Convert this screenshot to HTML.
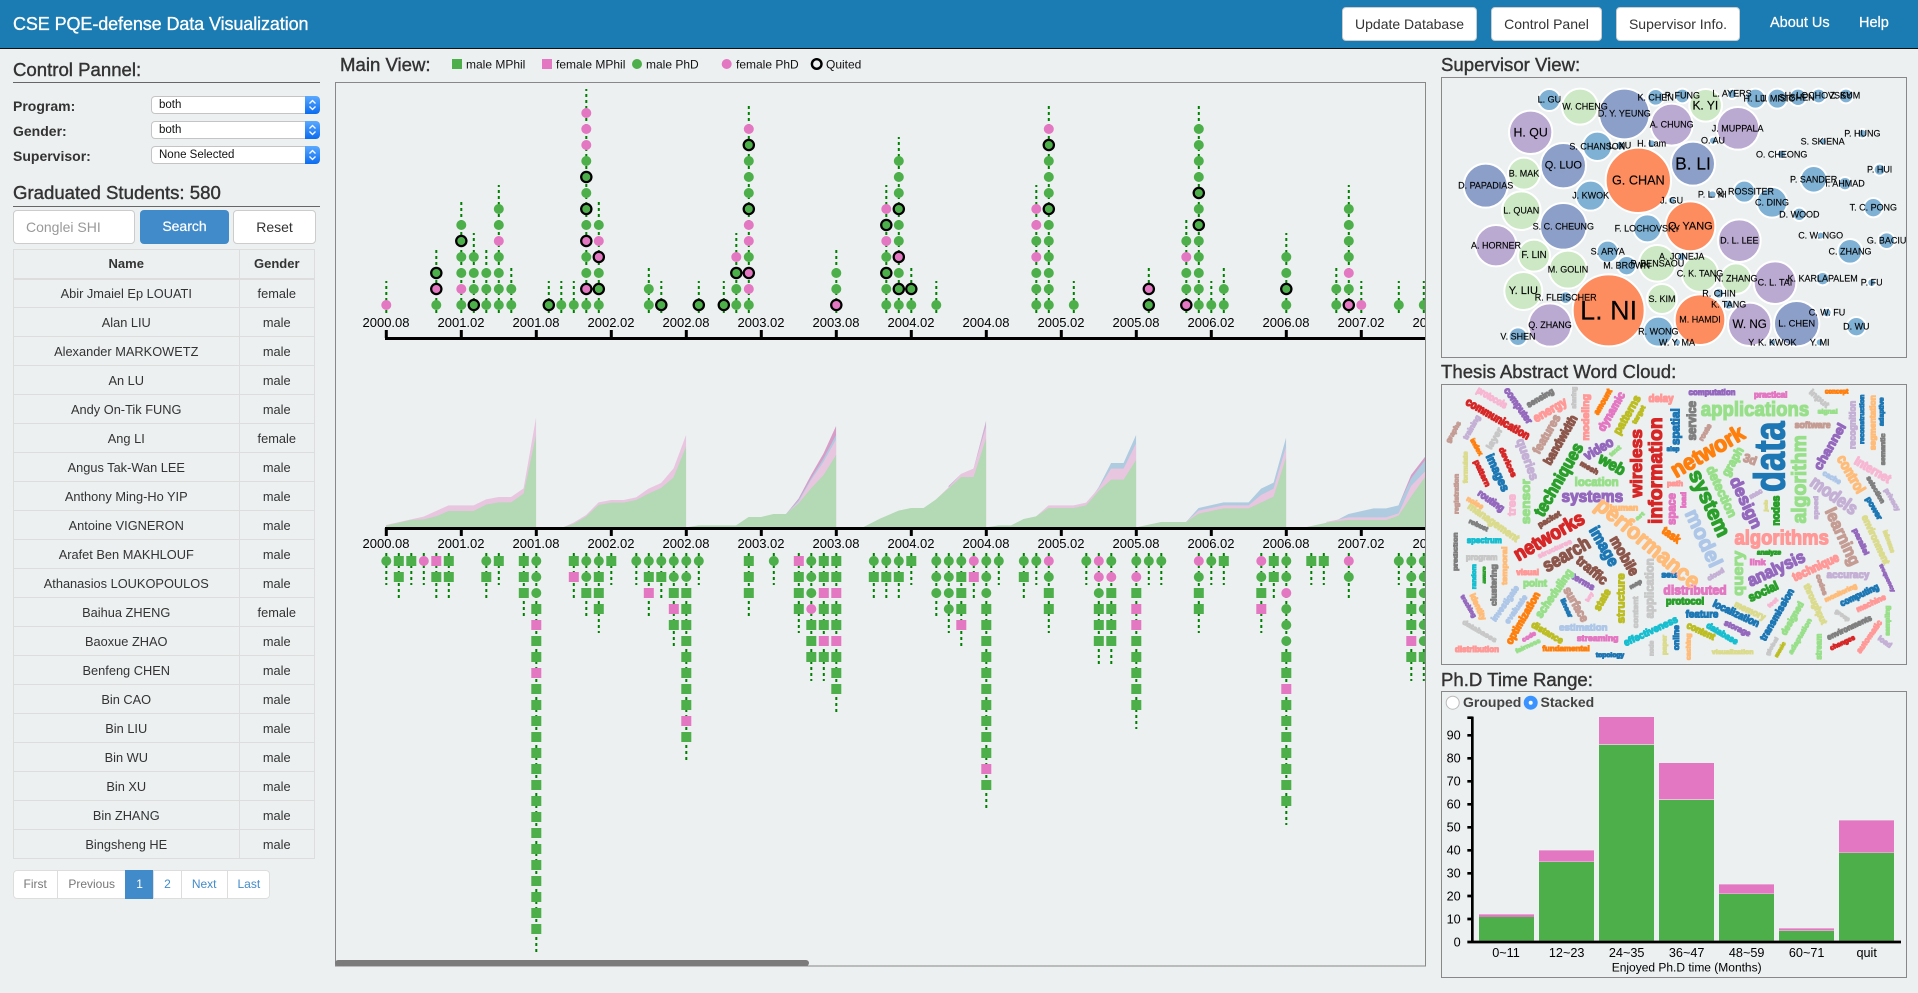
<!DOCTYPE html>
<html><head><meta charset="utf-8"><title>CSE PQE-defense Data Visualization</title>
<style>
html,body{margin:0;padding:0;width:1918px;height:993px;overflow:hidden;background:#ecf0f1;font-family:"Liberation Sans",sans-serif;color:#333}
.a{position:absolute}
#hd{left:0;top:0;width:1918px;height:48px;background:#1b7cb3;border-bottom:1px solid #111}
.btn{position:absolute;top:7px;height:34px;line-height:33px;background:#fff;border-radius:4px;border:1px solid #ccc;box-sizing:border-box;text-align:center;font-size:14px;color:#333}
.nv{position:absolute;top:15px;font-size:14.5px;color:#fff;-webkit-text-stroke:.25px #fff}
.h{position:absolute;font-size:18.6px;line-height:20px;color:#333;-webkit-text-stroke:.4px #333;white-space:nowrap}
.ln{position:absolute;left:13px;width:307px;height:1px;background:#666}
.lb{position:absolute;left:13px;font-size:14px;font-weight:bold;line-height:18px}
.sel{position:absolute;left:151px;width:169px;height:18px;background:#fff;border-radius:4px;box-shadow:0 0 0 1px #c4c4c4 inset;font-size:11.5px;line-height:18px;text-indent:8px;color:#111;overflow:hidden}
.sel i{position:absolute;right:0;top:0;width:15px;height:18px;background:linear-gradient(#5aa9ff,#0b6cf0);border-radius:0 4px 4px 0}
.sel svg{position:absolute;right:3px;top:3px}
table{position:absolute;left:13px;top:249px;width:301px;border-collapse:collapse;table-layout:fixed;font-size:12.8px}
td,th{border:1px solid #ddd;height:28px;padding:0;text-align:center;box-sizing:border-box}
th{border-bottom:2px solid #ddd;font-size:13px}
tr{height:29px}
#pg{left:13px;top:870px;height:29px;width:257px;background:#fff;border-radius:4px;box-shadow:0 0 0 1px #ddd inset;font-size:12px;line-height:28px}
#pg span{position:absolute;top:0;height:29px;text-align:center;color:#428bca;border-left:1px solid #ddd;box-sizing:border-box}
#wc text{dominant-baseline:central;text-anchor:middle;font-weight:bold;font-family:"Liberation Sans",sans-serif}
#bb text{dominant-baseline:central;text-anchor:middle;fill:#000;stroke:#000;stroke-width:.4}
#bb circle{stroke:#fff;stroke-width:6}
.B{fill:#7fb1d4}.O{fill:#fd8c5f}.P{fill:#baa9d1}.V{fill:#8c9fc9}.G{fill:#cce8c4}
</style></head><body>
<div id="hd" class="a"></div>
<div class="a" style="left:13px;top:13px;font-size:18px;letter-spacing:-.1px;line-height:22px;color:#fff;white-space:nowrap;-webkit-text-stroke:.3px #fff">CSE PQE-defense Data Visualization</div>
<div class="btn" style="left:1342px;width:135px">Update Database</div>
<div class="btn" style="left:1491px;width:111px">Control Panel</div>
<div class="btn" style="left:1616px;width:124px">Supervisor Info.</div>
<div class="nv" style="left:1770px">About Us</div>
<div class="nv" style="left:1859px">Help</div>

<div class="h" style="left:13px;top:60px">Control Pannel:</div><div class="ln" style="top:82px"></div>
<div class="lb" style="top:97px">Program:</div>
<div class="sel" style="top:96px">both<i></i><svg width="9" height="12" fill="none" stroke="#fff" stroke-width="1.3"><path d="M1.5 4.5L4.5 1.5 7.5 4.5M1.5 7.5L4.5 10.5 7.5 7.5"/></svg></div>
<div class="lb" style="top:122px">Gender:</div>
<div class="sel" style="top:121px">both<i></i><svg width="9" height="12" fill="none" stroke="#fff" stroke-width="1.3"><path d="M1.5 4.5L4.5 1.5 7.5 4.5M1.5 7.5L4.5 10.5 7.5 7.5"/></svg></div>
<div class="lb" style="top:147px">Supervisor:</div>
<div class="sel" style="top:146px">None Selected<i></i><svg width="9" height="12" fill="none" stroke="#fff" stroke-width="1.3"><path d="M1.5 4.5L4.5 1.5 7.5 4.5M1.5 7.5L4.5 10.5 7.5 7.5"/></svg></div>
<div class="h" style="left:13px;top:183px">Graduated Students: 580</div><div class="ln" style="top:206px"></div>
<div class="a" style="left:13px;top:210px;width:122px;height:34px;box-sizing:border-box;background:#fff;border:1px solid #ccc;border-radius:4px;font-size:14px;line-height:32px;padding-left:12px;color:#999">Conglei SHI</div>
<div class="a" style="left:140px;top:210px;width:89px;height:34px;background:#428bca;border-radius:4px;font-size:14px;line-height:33px;text-align:center;color:#fff;-webkit-text-stroke:.2px #fff">Search</div>
<div class="a" style="left:233px;top:210px;width:83px;height:34px;box-sizing:border-box;background:#fff;border:1px solid #ccc;border-radius:4px;font-size:14px;line-height:32px;text-align:center">Reset</div>
<table><colgroup><col style="width:225.5px"><col style="width:75.5px"></colgroup>
<tr><th>Name</th><th>Gender</th></tr>
<tr><td>Abir Jmaiel Ep LOUATI</td><td>female</td></tr>
<tr><td>Alan LIU</td><td>male</td></tr>
<tr><td>Alexander MARKOWETZ</td><td>male</td></tr>
<tr><td>An LU</td><td>male</td></tr>
<tr><td>Andy On-Tik FUNG</td><td>male</td></tr>
<tr><td>Ang LI</td><td>female</td></tr>
<tr><td>Angus Tak-Wan LEE</td><td>male</td></tr>
<tr><td>Anthony Ming-Ho YIP</td><td>male</td></tr>
<tr><td>Antoine VIGNERON</td><td>male</td></tr>
<tr><td>Arafet Ben MAKHLOUF</td><td>male</td></tr>
<tr><td>Athanasios LOUKOPOULOS</td><td>male</td></tr>
<tr><td>Baihua ZHENG</td><td>female</td></tr>
<tr><td>Baoxue ZHAO</td><td>male</td></tr>
<tr><td>Benfeng CHEN</td><td>male</td></tr>
<tr><td>Bin CAO</td><td>male</td></tr>
<tr><td>Bin LIU</td><td>male</td></tr>
<tr><td>Bin WU</td><td>male</td></tr>
<tr><td>Bin XU</td><td>male</td></tr>
<tr><td>Bin ZHANG</td><td>male</td></tr>
<tr><td>Bingsheng HE</td><td>male</td></tr>
</table>
<div id="pg" class="a">
<span style="left:0;width:44.4px;color:#777;border-left:0">First</span>
<span style="left:44.4px;width:67.6px;color:#777">Previous</span>
<span style="left:112px;width:28.3px;background:#428bca;color:#fff;border-color:#428bca">1</span>
<span style="left:140.3px;width:27.4px">2</span>
<span style="left:167.7px;width:46px">Next</span>
<span style="left:213.7px;width:43.3px">Last</span>
</div>

<div class="h" style="left:340px;top:55px">Main View:</div>
<div class="h" style="left:1441px;top:55px">Supervisor View:</div>
<div class="h" style="left:1441px;top:362px">Thesis Abstract Word Cloud:</div>
<div class="h" style="left:1441px;top:670px">Ph.D Time Range:</div>
<div class="a" style="left:1463px;top:694px;font-size:14px;font-weight:bold;color:#444;line-height:16px">Grouped</div>
<div class="a" style="left:1540.5px;top:694px;font-size:14px;font-weight:bold;color:#444;line-height:16px">Stacked</div>

<svg class="a" style="left:0;top:0" width="1918" height="993" viewBox="0 0 1918 993" font-family="'Liberation Sans',sans-serif">
<defs><clipPath id="mc"><rect x="336" y="83" width="1089" height="883"/></clipPath>
<filter id="d" x="-5%" y="-5%" width="110%" height="110%"><feMorphology operator="dilate" radius="1"/></filter></defs>
<!-- legend -->
<rect x="452" y="59" width="10" height="10" fill="#4daf4a"/><text x="466" y="68.5" font-size="12" fill="#111">male MPhil</text>
<rect x="542" y="59" width="10" height="10" fill="#e377c2"/><text x="556" y="68.5" font-size="12" fill="#111">female MPhil</text>
<circle cx="637" cy="64" r="5" fill="#4daf4a"/><text x="646" y="68.5" font-size="12" fill="#111">male PhD</text>
<circle cx="726.7" cy="64" r="5" fill="#e377c2"/><text x="736" y="68.5" font-size="12" fill="#111">female PhD</text>
<circle cx="816.7" cy="64" r="4.8" fill="none" stroke="#000" stroke-width="2.4"/><text x="826" y="68.5" font-size="12" fill="#111">Quited</text>

<rect x="335.5" y="82.5" width="1090" height="883.5" fill="none" stroke="#888"/>
<g clip-path="url(#mc)">
<!-- top dashes -->
<path fill="none" stroke="#008000" stroke-width="2" stroke-dasharray="3 3" d="M386.3 313V281M436.3 313V249M461.3 313V201M473.8 313V233M486.3 313V249M498.8 313V185M511.3 313V265M548.8 313V281M561.3 313V281M573.8 313V281M586.3 313V89M598.8 313V201M648.8 313V265M661.3 313V281M698.8 313V281M723.8 313V281M736.3 313V233M748.8 313V105M836.3 313V249M886.3 313V185M898.8 313V137M911.3 313V265M936.3 313V281M1036.3 313V185M1048.8 313V105M1073.8 313V281M1148.8 313V265M1186.3 313V217M1198.8 313V105M1211.3 313V281M1223.8 313V265M1286.3 313V233M1336.3 313V265M1348.8 313V185M1361.3 313V281M1398.8 313V281M1423.8 313V281"/>
<!-- top marks -->
<path fill="none" stroke="#4daf4a" stroke-width="10" stroke-linecap="round" d="M436.3 305h0M461.3 305h0M461.3 273h0M461.3 257h0M461.3 225h0M473.8 289h0M473.8 273h0M473.8 257h0M486.3 305h0M486.3 289h0M486.3 273h0M498.8 305h0M498.8 289h0M498.8 273h0M498.8 257h0M498.8 225h0M498.8 209h0M511.3 305h0M511.3 289h0M561.3 305h0M573.8 305h0M586.3 305h0M586.3 273h0M586.3 257h0M586.3 225h0M586.3 193h0M586.3 161h0M598.8 305h0M598.8 273h0M598.8 225h0M648.8 305h0M648.8 289h0M736.3 305h0M736.3 289h0M748.8 305h0M748.8 257h0M748.8 193h0M748.8 177h0M748.8 161h0M836.3 289h0M836.3 273h0M886.3 305h0M886.3 289h0M886.3 257h0M898.8 305h0M898.8 273h0M898.8 241h0M898.8 225h0M898.8 193h0M898.8 177h0M898.8 161h0M911.3 305h0M936.3 305h0M1036.3 305h0M1036.3 289h0M1036.3 273h0M1036.3 241h0M1048.8 305h0M1048.8 289h0M1048.8 273h0M1048.8 257h0M1048.8 241h0M1048.8 225h0M1048.8 193h0M1048.8 177h0M1048.8 161h0M1073.8 305h0M1186.3 289h0M1186.3 273h0M1186.3 241h0M1198.8 305h0M1198.8 289h0M1198.8 273h0M1198.8 257h0M1198.8 241h0M1198.8 209h0M1198.8 177h0M1198.8 161h0M1198.8 145h0M1198.8 129h0M1211.3 305h0M1223.8 305h0M1223.8 289h0M1286.3 305h0M1286.3 273h0M1286.3 257h0M1336.3 305h0M1336.3 289h0M1348.8 289h0M1348.8 257h0M1348.8 241h0M1348.8 225h0M1348.8 209h0M1398.8 305h0M1423.8 305h0"/>
<path fill="none" stroke="#e377c2" stroke-width="10" stroke-linecap="round" d="M386.3 305h0M461.3 289h0M498.8 241h0M586.3 145h0M586.3 129h0M586.3 113h0M598.8 241h0M736.3 257h0M748.8 289h0M748.8 241h0M748.8 225h0M748.8 129h0M886.3 241h0M886.3 209h0M1036.3 257h0M1036.3 225h0M1036.3 209h0M1048.8 129h0M1186.3 257h0M1348.8 273h0M1361.3 305h0"/>
<path fill="none" stroke="#000" stroke-width="12.5" stroke-linecap="round" d="M436.3 273h0M461.3 241h0M473.8 305h0M548.8 305h0M586.3 209h0M586.3 177h0M598.8 289h0M661.3 305h0M698.8 305h0M723.8 305h0M736.3 273h0M748.8 209h0M748.8 145h0M886.3 273h0M886.3 225h0M898.8 289h0M898.8 209h0M911.3 289h0M1048.8 209h0M1048.8 145h0M1148.8 305h0M1198.8 225h0M1198.8 193h0M1286.3 289h0M436.3 289h0M586.3 289h0M586.3 241h0M598.8 257h0M748.8 273h0M836.3 305h0M898.8 257h0M1148.8 289h0M1186.3 305h0M1348.8 305h0"/>
<path fill="none" stroke="#4daf4a" stroke-width="8" stroke-linecap="round" d="M436.3 273h0M461.3 241h0M473.8 305h0M548.8 305h0M586.3 209h0M586.3 177h0M598.8 289h0M661.3 305h0M698.8 305h0M723.8 305h0M736.3 273h0M748.8 209h0M748.8 145h0M886.3 273h0M886.3 225h0M898.8 289h0M898.8 209h0M911.3 289h0M1048.8 209h0M1048.8 145h0M1148.8 305h0M1198.8 225h0M1198.8 193h0M1286.3 289h0"/>
<path fill="none" stroke="#e377c2" stroke-width="8" stroke-linecap="round" d="M436.3 289h0M586.3 289h0M586.3 241h0M598.8 257h0M748.8 273h0M836.3 305h0M898.8 257h0M1148.8 289h0M1186.3 305h0M1348.8 305h0"/>
<!-- top axis -->
<path fill="none" stroke="#000" stroke-width="3" d="M385 338.5H1425M386.3 330V338M461.3 330V338M536.3 330V338M611.3 330V338M686.3 330V338M761.3 330V338M836.3 330V338M911.3 330V338M986.3 330V338M1061.3 330V338M1136.3 330V338M1211.3 330V338M1286.3 330V338M1361.3 330V338M1436.3 330V338"/>
<g font-size="13" fill="#000" text-anchor="middle">
<text x="386" y="327">2000.08</text><text x="461" y="327">2001.02</text><text x="536" y="327">2001.08</text><text x="611" y="327">2002.02</text><text x="686" y="327">2002.08</text><text x="761" y="327">2003.02</text><text x="836" y="327">2003.08</text><text x="911" y="327">2004.02</text><text x="986" y="327">2004.08</text><text x="1061" y="327">2005.02</text><text x="1136" y="327">2005.08</text><text x="1211" y="327">2006.02</text><text x="1286" y="327">2006.08</text><text x="1361" y="327">2007.02</text><text x="1436" y="327">2007.08</text>
</g>
<!-- areas -->
<g transform="translate(330 400) scale(.35714 .33333)">
<polygon fill="#e8c6e0" points="157,382 157,375 227,358 262,350 297,333 332,316 402,316 437,298 472,291 507,291 542,265 577,52 577,382"/>
<polygon fill="#b3d9b5" points="157,382 157,377 227,360 262,358 297,349 332,333 402,333 437,314 472,307 507,307 542,281 577,105 577,382"/>
<polygon fill="#e8c6e0" points="652,382 682,368 717,345 752,307 787,300 822,300 857,292 892,266 927,249 962,205 997,105 997,382"/>
<polygon fill="#b3d9b5" points="652,382 682,372 717,350 752,315 787,308 822,308 857,300 892,281 927,264 962,232 997,140 997,382"/>
<polygon fill="#d79cc8" points="1277,342 1312,296 1347,225 1382,160 1417,78 1417,382"/>
<polygon fill="#aecbe0" points="1277,342 1312,300 1347,235 1382,175 1417,105 1417,382"/>
<polygon fill="#e8c6e0" points="1277,342 1312,305 1347,240 1382,185 1417,118 1417,382"/>
<polygon fill="#b3d9b5" points="997,382 1032,376 1137,376 1172,351 1207,351 1242,342 1277,342 1312,310 1347,265 1382,225 1417,165 1417,382"/>
</g>
<g transform="translate(880 400) scale(.35714 .33333)">
<polygon fill="#cdb3d6" points="192,258 227,222 262,206 297,62 297,382 192,382"/>
<polygon fill="#e8c6e0" points="157,298 192,262 227,222 262,206 297,80 297,382 157,382"/>
<polygon fill="#b3d9b5" points="-48,382 0,356 52,332 87,324 122,324 157,298 192,265 227,231 262,231 297,115 297,382"/>
<polygon fill="#aecbe0" points="577,316 612,262 647,189 682,189 717,105 717,382 577,382"/>
<polygon fill="#e8c6e0" points="437,349 472,316 542,316 577,308 612,265 647,206 682,206 717,130 717,382 437,382"/>
<polygon fill="#b3d9b5" points="297,382 332,376 367,376 402,357 437,349 472,324 542,324 577,316 612,273 647,239 682,239 717,180 717,382"/>
<polygon fill="#aecbe0" points="857,366 892,324 962,307 1032,307 1067,266 1102,248 1137,113 1137,382 857,382"/>
<polygon fill="#e8c6e0" points="857,366 892,332 962,316 1032,316 1067,285 1102,266 1137,140 1137,382 857,382"/>
<polygon fill="#b3d9b5" points="717,382 787,366 857,366 892,341 962,325 1032,325 1102,290 1137,172 1137,382"/>
<polygon fill="#d79cc8" points="1452,316 1487,225 1530,165 1530,382 1452,382"/>
<polygon fill="#aecbe0" points="1250,366 1280,360 1312,342 1382,325 1417,325 1452,316 1487,235 1530,175 1530,382 1250,382"/>
<polygon fill="#e8c6e0" points="1250,366 1312,352 1417,352 1452,340 1487,258 1530,210 1530,382 1250,382"/>
<polygon fill="#b3d9b5" points="1190,382 1260,366 1312,360 1417,360 1452,347 1487,290 1530,225 1530,382"/>
</g>
<!-- mid axis -->
<path fill="none" stroke="#000" stroke-width="3" d="M385 528.5H1425M386.3 528V536M461.3 528V536M536.3 528V536M611.3 528V536M686.3 528V536M761.3 528V536M836.3 528V536M911.3 528V536M986.3 528V536M1061.3 528V536M1136.3 528V536M1211.3 528V536M1286.3 528V536M1361.3 528V536M1436.3 528V536"/>
<g font-size="13" fill="#000" text-anchor="middle">
<text x="386" y="548">2000.08</text><text x="461" y="548">2001.02</text><text x="536" y="548">2001.08</text><text x="611" y="548">2002.02</text><text x="686" y="548">2002.08</text><text x="761" y="548">2003.02</text><text x="836" y="548">2003.08</text><text x="911" y="548">2004.02</text><text x="986" y="548">2004.08</text><text x="1061" y="548">2005.02</text><text x="1136" y="548">2005.08</text><text x="1211" y="548">2006.02</text><text x="1286" y="548">2006.08</text><text x="1361" y="548">2007.02</text><text x="1436" y="548">2007.08</text>
</g>
<!-- bottom dashes -->
<path fill="none" stroke="#008000" stroke-width="2" stroke-dasharray="3 3" d="M386.3 553V585M398.8 553V601M411.3 553V585M423.8 553V585M436.3 553V601M448.8 553V601M486.3 553V601M498.8 553V585M523.8 553V617M536.3 553V953M573.8 553V601M586.3 553V617M598.8 553V633M611.3 553V585M636.3 553V585M648.8 553V617M661.3 553V601M673.8 553V649M686.3 553V761M698.8 553V585M748.8 553V617M773.8 553V585M798.8 553V633M811.3 553V681M823.8 553V681M836.3 553V713M873.8 553V601M886.3 553V601M898.8 553V601M911.3 553V585M936.3 553V617M948.8 553V633M961.3 553V649M973.8 553V601M986.3 553V809M998.8 553V585M1023.8 553V601M1036.3 553V585M1048.8 553V633M1086.3 553V585M1098.8 553V665M1111.3 553V665M1136.3 553V729M1148.8 553V585M1161.3 553V585M1198.8 553V633M1211.3 553V585M1223.8 553V585M1261.3 553V633M1273.8 553V601M1286.3 553V825M1311.3 553V585M1323.8 553V585M1348.8 553V601M1398.8 553V585M1411.3 553V681M1423.8 553V681"/>
<!-- bottom circles -->
<path fill="none" stroke="#4daf4a" stroke-width="10" stroke-linecap="round" d="M386.3 561h0M486.3 561h0M536.3 561h0m0 16h0m0 16h0M586.3 561h0m0 16h0M598.8 561h0M636.3 561h0M648.8 561h0M661.3 561h0M673.8 561h0m0 16h0M686.3 561h0m0 16h0M698.8 561h0M773.8 561h0M811.3 561h0m0 16h0m0 16h0M873.8 561h0M886.3 561h0M898.8 561h0M936.3 561h0m0 16h0m0 16h0M948.8 561h0m0 16h0m0 16h0m0 16h0M961.3 561h0M986.3 561h0m0 16h0m0 16h0M998.8 561h0M1023.8 561h0M1036.3 561h0M1048.8 577h0M1086.3 561h0M1098.8 593h0M1111.3 561h0M1136.3 561h0M1148.8 561h0M1161.3 561h0M1198.8 577h0M1211.3 561h0M1261.3 577h0M1286.3 561h0m0 16h0M1286.3 609h0m0 16h0m0 16h0M1348.8 577h0M1398.8 561h0M1411.3 561h0m0 16h0M1423.8 561h0m0 16h0m0 16h0m0 16h0m0 16h0m0 16h0"/>
<!-- bottom pink circles -->
<path fill="none" stroke="#e377c2" stroke-width="10" stroke-linecap="round" d="M423.8 561h0M811.3 609h0M973.8 561h0M1048.8 561h0M1098.8 561h0m0 16h0M1111.3 577h0M1136.3 577h0M1198.8 561h0M1261.3 561h0M1286.3 593h0M1348.8 561h0"/>
<!-- green squares -->
<path fill="none" stroke="#4daf4a" stroke-width="10" stroke-linecap="square" d="M398.8 561h0m0 16h0M411.3 561h0M436.3 577h0M448.8 561h0m0 16h0M486.3 577h0M498.8 561h0M523.8 561h0m0 16h0m0 16h0M536.3 609h0M536.3 641h0m0 16h0M536.3 689h0m0 16h0m0 16h0m0 16h0m0 16h0m0 16h0m0 16h0m0 16h0m0 16h0m0 16h0m0 16h0m0 16h0m0 16h0m0 16h0m0 16h0m0 16h0M573.8 561h0M586.3 593h0M598.8 577h0m0 16h0m0 16h0M611.3 561h0M648.8 577h0M661.3 577h0M673.8 593h0M673.8 625h0M686.3 593h0m0 16h0m0 16h0m0 16h0m0 16h0m0 16h0m0 16h0m0 16h0M686.3 737h0M748.8 561h0m0 16h0m0 16h0M798.8 577h0m0 16h0m0 16h0M811.3 625h0m0 16h0m0 16h0M823.8 561h0m0 16h0M823.8 609h0m0 16h0M823.8 657h0M836.3 561h0m0 16h0M836.3 609h0m0 16h0M836.3 657h0m0 16h0m0 16h0M873.8 577h0M886.3 577h0M898.8 577h0M911.3 561h0M961.3 577h0m0 16h0m0 16h0M986.3 609h0m0 16h0m0 16h0m0 16h0m0 16h0m0 16h0m0 16h0m0 16h0m0 16h0m0 16h0M986.3 785h0M1023.8 577h0M1048.8 593h0m0 16h0M1098.8 609h0m0 16h0m0 16h0M1111.3 593h0m0 16h0m0 16h0m0 16h0M1136.3 593h0M1136.3 641h0m0 16h0m0 16h0m0 16h0m0 16h0M1198.8 593h0m0 16h0M1223.8 561h0M1261.3 593h0M1273.8 561h0m0 16h0M1286.3 657h0m0 16h0M1286.3 705h0m0 16h0m0 16h0m0 16h0m0 16h0m0 16h0m0 16h0M1311.3 561h0M1323.8 561h0M1411.3 593h0m0 16h0m0 16h0M1411.3 657h0M1423.8 657h0"/>
<!-- pink squares -->
<path fill="none" stroke="#e377c2" stroke-width="10" stroke-linecap="square" d="M436.3 561h0M536.3 625h0M536.3 673h0M573.8 577h0M648.8 593h0M673.8 609h0M686.3 721h0M798.8 561h0M823.8 593h0M823.8 641h0M836.3 593h0M836.3 641h0M961.3 625h0M973.8 577h0M986.3 769h0M1136.3 609h0m0 16h0M1261.3 609h0M1286.3 689h0M1411.3 641h0"/>
</g>
<rect x="335" y="960" width="474" height="6" rx="3" fill="#7b7b7b"/>

<!-- supervisor view -->
<rect x="1441.5" y="77.5" width="465" height="280" fill="none" stroke="#888"/>
<g id="bb" transform="translate(1430 0) scale(.33333)" font-size="27">
<circle class="B" cx="358" cy="300" r="33"/><circle class="G" cx="450" cy="320" r="54"/><circle class="V" cx="583" cy="342" r="76"/><circle class="B" cx="677" cy="292" r="25"/><circle class="B" cx="757" cy="288" r="22"/><circle class="G" cx="827" cy="316" r="49"/><circle class="P" cx="725" cy="374" r="63"/><circle class="B" cx="906" cy="282" r="15"/><circle class="B" cx="976" cy="296" r="30"/><circle class="B" cx="1042" cy="296" r="30"/><circle class="B" cx="1104" cy="292" r="26"/><circle class="B" cx="1166" cy="288" r="22"/><circle class="B" cx="1248" cy="288" r="22"/>
<circle class="P" cx="302" cy="397" r="65"/><circle class="P" cx="924" cy="385" r="64"/><circle class="B" cx="849" cy="422" r="12"/><circle class="B" cx="665" cy="431" r="13"/><circle class="B" cx="570" cy="437" r="14"/><circle class="B" cx="502" cy="439" r="44"/><circle class="B" cx="1179" cy="425" r="12"/><circle class="B" cx="1297" cy="401" r="14"/><circle class="B" cx="1055" cy="463" r="14"/>
<circle class="V" cx="400" cy="497" r="68"/><circle class="G" cx="282" cy="521" r="48"/><circle class="V" cx="167" cy="557" r="66"/><circle class="O" cx="625" cy="541" r="98"/><circle class="V" cx="789" cy="491" r="66"/><circle class="B" cx="1151" cy="538" r="40"/><circle class="B" cx="1349" cy="509" r="18"/><circle class="B" cx="1245" cy="551" r="20"/><circle class="B" cx="482" cy="587" r="45"/><circle class="G" cx="274" cy="632" r="58"/><circle class="B" cx="943" cy="575" r="33"/><circle class="B" cx="847" cy="584" r="13"/><circle class="B" cx="1026" cy="607" r="46"/><circle class="B" cx="725" cy="601" r="12"/><circle class="B" cx="1108" cy="643" r="20"/><circle class="B" cx="1330" cy="623" r="29"/>
<circle class="V" cx="400" cy="679" r="70"/><circle class="B" cx="652" cy="685" r="42"/><circle class="O" cx="781" cy="679" r="75"/><circle class="P" cx="928" cy="722" r="64"/><circle class="B" cx="1172" cy="707" r="12"/><circle class="B" cx="1370" cy="722" r="25"/><circle class="B" cx="1260" cy="754" r="37"/><circle class="P" cx="198" cy="737" r="62"/><circle class="G" cx="312" cy="767" r="48"/><circle class="B" cx="533" cy="755" r="33"/><circle class="B" cx="755" cy="770" r="14"/><circle class="G" cx="414" cy="809" r="57"/><circle class="B" cx="590" cy="797" r="29"/><circle class="G" cx="682" cy="790" r="55"/><circle class="G" cx="810" cy="821" r="55"/><circle class="G" cx="918" cy="836" r="46"/><circle class="P" cx="1035" cy="848" r="64"/><circle class="B" cx="1178" cy="836" r="20"/><circle class="B" cx="1325" cy="848" r="13"/><circle class="G" cx="280" cy="873" r="57"/><circle class="B" cx="407" cy="893" r="19"/><circle class="O" cx="536" cy="931" r="108"/><circle class="G" cx="696" cy="897" r="45"/><circle class="B" cx="867" cy="880" r="16"/><circle class="B" cx="896" cy="914" r="15"/><circle class="O" cx="810" cy="959" r="76"/><circle class="B" cx="1191" cy="938" r="14"/><circle class="P" cx="959" cy="973" r="65"/><circle class="V" cx="1100" cy="971" r="68"/><circle class="B" cx="1279" cy="980" r="29"/><circle class="P" cx="360" cy="975" r="65"/><circle class="B" cx="685" cy="995" r="45"/><circle class="B" cx="264" cy="1010" r="28"/><circle class="B" cx="741" cy="1027" r="12"/><circle class="B" cx="1027" cy="1027" r="12"/><circle class="B" cx="1169" cy="1027" r="12"/>

<text x="358" y="298">L. GU</text><text x="465" y="320">W. CHENG</text><text x="583" y="341">D. Y. YEUNG</text><text x="677" y="292">K. CHEN</text><text x="757" y="287">P. FUNG</text><text x="826" y="316" font-size="36">K. YI</text><text x="725" y="374">A. CHUNG</text><text x="906" y="281">L. AYERS</text><text x="975" y="296">H. LU</text><text x="1043" y="296">J. MISIC</text><text x="1100" y="292">S. SHEN</text><text x="1165" y="287">H. LOCHOVSKY</text><text x="1245" y="287">Z. SUM</text>
<text x="302" y="397" font-size="37">H. QU</text><text x="923" y="386">J. MUPPALA</text><text x="849" y="422">O. AU</text><text x="665" y="431">H. Lam</text><text x="570" y="437">L. XU</text><text x="502" y="439">S. CHANSON</text><text x="1178" y="425">S. SKIENA</text><text x="1297" y="401">P. HUNG</text><text x="1055" y="463">O. CHEONG</text>
<text x="400" y="497" font-size="33">Q. LUO</text><text x="282" y="521">B. MAK</text><text x="167" y="557">D. PAPADIAS</text><text x="625" y="541" font-size="38">G. CHAN</text><text x="789" y="491" font-size="52">B. LI</text><text x="1151" y="539">P. SANDER</text><text x="1349" y="509">P. HUI</text><text x="1245" y="551">I. AHMAD</text><text x="482" y="587">J. KWOK</text><text x="274" y="632">L. QUAN</text><text x="945" y="575">Q. ROSSITER</text><text x="847" y="584">P. L. NI</text><text x="1026" y="607">C. DING</text><text x="725" y="601">J. GU</text><text x="1108" y="643">D. WOOD</text><text x="1330" y="623">T. C. PONG</text>
<text x="400" y="679">S. C. CHEUNG</text><text x="652" y="685">F. LOCHOVSKY</text><text x="781" y="679" font-size="33">Q. YANG</text><text x="928" y="722">D. L. LEE</text><text x="1172" y="707">C. W. NGO</text><text x="1370" y="722">G. BACIU</text><text x="1260" y="754">C. ZHANG</text><text x="198" y="737">A. HORNER</text><text x="312" y="766" font-size="29">F. LIN</text><text x="533" y="755">S. ARYA</text><text x="755" y="770">A. JONEJA</text><text x="414" y="809">M. GOLIN</text><text x="590" y="797">M. BROWN</text><text x="682" y="790">P. BENSAOU</text><text x="810" y="821">C. K. TANG</text><text x="918" y="836">N. ZHANG</text><text x="1035" y="848">C. L. TAI</text><text x="1178" y="836">K. KARLAPALEM</text><text x="1325" y="848">P. FU</text><text x="280" y="873" font-size="33">Y. LIU</text><text x="407" y="893">R. FLEISCHER</text><text x="536" y="931" font-size="81">L. NI</text><text x="696" y="897">S. KIM</text><text x="867" y="880">R. CHIN</text><text x="896" y="914">K. TANG</text><text x="810" y="959">M. HAMDI</text><text x="1191" y="938">C. W. FU</text><text x="959" y="973" font-size="35">W. NG</text><text x="1100" y="971" font-size="28">L. CHEN</text><text x="1279" y="980">D. WU</text><text x="360" y="975">Q. ZHANG</text><text x="685" y="995">R. WONG</text><text x="264" y="1010">V. SHEN</text><text x="741" y="1027">W. Y. MA</text><text x="1027" y="1027">Y. K. KWOK</text><text x="1169" y="1027">Y. MI</text>
</g>

<!-- word cloud -->
<rect x="1441.5" y="384.5" width="465" height="280" fill="none" stroke="#888"/>
<g id="wc" transform="translate(1430 360) scale(.33333)" filter="url(#d)">
<text transform="translate(185 115)rotate(30)" font-size="30" textLength="100" lengthAdjust="spacingAndGlyphs" fill="#f7b6d2">protocols</text>
<text transform="translate(263 138)rotate(55)" font-size="30" textLength="125" lengthAdjust="spacingAndGlyphs" fill="#9467bd">computer</text>
<text transform="translate(330 113)rotate(-30)" font-size="25" textLength="90" lengthAdjust="spacingAndGlyphs" fill="#7f7f7f">sensing</text>
<text transform="translate(203 177)rotate(30)" font-size="35" textLength="215" lengthAdjust="spacingAndGlyphs" fill="#d62728">communication</text>
<text transform="translate(360 150)rotate(-30)" font-size="38" textLength="110" lengthAdjust="spacingAndGlyphs" fill="#ff9896">energy</text>
<text transform="translate(433 113)rotate(-90)" font-size="20" textLength="65" lengthAdjust="spacingAndGlyphs" fill="#c7c7c7">sharing</text>
<text transform="translate(470 172)rotate(-90)" font-size="30" textLength="140" lengthAdjust="spacingAndGlyphs" fill="#ff9896">modeling</text>
<text transform="translate(518 125)rotate(-60)" font-size="25" textLength="85" lengthAdjust="spacingAndGlyphs" fill="#ff7f0e">amount</text>
<text transform="translate(545 155)rotate(-60)" font-size="35" textLength="130" lengthAdjust="spacingAndGlyphs" fill="#e377c2">dynamic</text>
<text transform="translate(592 165)rotate(-60)" font-size="35" textLength="130" lengthAdjust="spacingAndGlyphs" fill="#bcbd22">patterns</text>
<text transform="translate(628 165)rotate(-60)" font-size="20" textLength="60" lengthAdjust="spacingAndGlyphs" fill="#bcbd22">target</text>
<text transform="translate(693 117)" font-size="33" textLength="75" lengthAdjust="spacingAndGlyphs" fill="#ff9896">delay</text>
<text transform="translate(846 97)" font-size="24" textLength="140" lengthAdjust="spacingAndGlyphs" fill="#9467bd">computation</text>
<text transform="translate(1022 103)" font-size="26" textLength="100" lengthAdjust="spacingAndGlyphs" fill="#e377c2">practical</text>
<text transform="translate(1168 115)rotate(40)" font-size="25" textLength="70" lengthAdjust="spacingAndGlyphs" fill="#c7c7c7">input</text>
<text transform="translate(1220 97)" font-size="18" textLength="70" lengthAdjust="spacingAndGlyphs" fill="#ff7f0e">concept</text>
<text transform="translate(1193 156)" font-size="20" textLength="60" lengthAdjust="spacingAndGlyphs" fill="#98df8a">signal</text>
<text transform="translate(1268 195)rotate(-90)" font-size="27" textLength="145" lengthAdjust="spacingAndGlyphs" fill="#c5b0d5">recognition</text>
<text transform="translate(1297 178)rotate(-90)" font-size="20" textLength="148" lengthAdjust="spacingAndGlyphs" fill="#1f77b4">reconstruction</text>
<text transform="translate(1327 188)rotate(-90)" font-size="26" textLength="165" lengthAdjust="spacingAndGlyphs" fill="#ffbb78">segmentation</text>
<text transform="translate(1356 155)rotate(-90)" font-size="19" textLength="85" lengthAdjust="spacingAndGlyphs" fill="#1f77b4">adaptive</text>
<text transform="translate(1360 268)rotate(-90)" font-size="19" textLength="95" lengthAdjust="spacingAndGlyphs" fill="#7f7f7f">semantic</text>
<text transform="translate(975 150)" font-size="60" textLength="325" lengthAdjust="spacingAndGlyphs" fill="#98df8a">applications</text>
<text transform="translate(786 182)rotate(-90)" font-size="38" textLength="118" lengthAdjust="spacingAndGlyphs" fill="#7f7f7f">service</text>
<text transform="translate(737 200)rotate(-90)" font-size="36" textLength="110" lengthAdjust="spacingAndGlyphs" fill="#1f77b4">spatial</text>
<text transform="translate(1148 195)" font-size="28" textLength="108" lengthAdjust="spacingAndGlyphs" fill="#c49c94">software</text>
<text transform="translate(1200 260)rotate(-60)" font-size="38" textLength="155" lengthAdjust="spacingAndGlyphs" fill="#9467bd">channel</text>
<text transform="translate(729 270)" font-size="18" textLength="38" lengthAdjust="spacingAndGlyphs" fill="#1f77b4">sisp</text>
<text transform="translate(825 217)rotate(-60)" font-size="22" textLength="55" lengthAdjust="spacingAndGlyphs" fill="#c49c94">route</text>
<text transform="translate(72 217)rotate(-60)" font-size="20" textLength="70" lengthAdjust="spacingAndGlyphs" fill="#c49c94">graphs</text>
<text transform="translate(125 202)rotate(-60)" font-size="23" textLength="80" lengthAdjust="spacingAndGlyphs" fill="#c5b0d5">training</text>
<text transform="translate(193 235)rotate(-60)" font-size="27" textLength="70" lengthAdjust="spacingAndGlyphs" fill="#c7c7c7">layer</text>
<text transform="translate(350 222)rotate(-60)" font-size="37" textLength="130" lengthAdjust="spacingAndGlyphs" fill="#c49c94">features</text>
<text transform="translate(392 240)rotate(-60)" font-size="38" textLength="165" lengthAdjust="spacingAndGlyphs" fill="#8c564b">bandwidth</text>
<text transform="translate(138 262)rotate(60)" font-size="20" textLength="55" lengthAdjust="spacingAndGlyphs" fill="#ff7f0e">index</text>
<text transform="translate(110 322)rotate(-90)" font-size="18" textLength="95" lengthAdjust="spacingAndGlyphs" fill="#dbdb8d">formulate</text>
<text transform="translate(292 298)rotate(70)" font-size="38" textLength="130" lengthAdjust="spacingAndGlyphs" fill="#c5b0d5">queries</text>
<text transform="translate(233 307)rotate(65)" font-size="24" textLength="95" lengthAdjust="spacingAndGlyphs" fill="#d62728">devices</text>
<text transform="translate(203 338)rotate(65)" font-size="36" textLength="120" lengthAdjust="spacingAndGlyphs" fill="#1f77b4">images</text>
<text transform="translate(156 340)rotate(65)" font-size="24" textLength="85" lengthAdjust="spacingAndGlyphs" fill="#d62728">pattern</text>
<text transform="translate(82 402)rotate(-90)" font-size="18" textLength="120" lengthAdjust="spacingAndGlyphs" fill="#c49c94">registration</text>
<text transform="translate(385 358)rotate(-60)" font-size="52" textLength="245" lengthAdjust="spacingAndGlyphs" fill="#2ca02c">techniques</text>
<text transform="translate(505 265)rotate(-30)" font-size="42" textLength="95" lengthAdjust="spacingAndGlyphs" fill="#9467bd">video</text>
<text transform="translate(557 275)rotate(-40)" font-size="18" textLength="40" lengthAdjust="spacingAndGlyphs" fill="#98df8a">text</text>
<text transform="translate(545 315)rotate(30)" font-size="48" textLength="85" lengthAdjust="spacingAndGlyphs" fill="#2ca02c">web</text>
<text transform="translate(478 323)rotate(30)" font-size="22" textLength="60" lengthAdjust="spacingAndGlyphs" fill="#8c564b">mesh</text>
<text transform="translate(620 310)rotate(-90)" font-size="50" textLength="205" lengthAdjust="spacingAndGlyphs" fill="#d62728">wireless</text>
<text transform="translate(680 332)rotate(-90)" font-size="58" textLength="320" lengthAdjust="spacingAndGlyphs" fill="#d62728">information</text>
<text transform="translate(832 273)rotate(-30)" font-size="68" textLength="245" lengthAdjust="spacingAndGlyphs" fill="#ff7f0e">network</text>
<text transform="translate(908 305)rotate(-60)" font-size="37" textLength="95" lengthAdjust="spacingAndGlyphs" fill="#98df8a">graph</text>
<text transform="translate(960 298)rotate(20)" font-size="36" textLength="40" lengthAdjust="spacingAndGlyphs" fill="#c49c94">3d</text>
<text transform="translate(1022 290)rotate(-90)" font-size="130" textLength="212" lengthAdjust="spacingAndGlyphs" fill="#1f77b4">data</text>
<text transform="translate(1108 358)rotate(-90)" font-size="62" textLength="265" lengthAdjust="spacingAndGlyphs" fill="#98df8a">algorithm</text>
<text transform="translate(1262 343)rotate(60)" font-size="45" textLength="125" lengthAdjust="spacingAndGlyphs" fill="#ffbb78">control</text>
<text transform="translate(1328 330)rotate(30)" font-size="38" textLength="120" lengthAdjust="spacingAndGlyphs" fill="#f7b6d2">Internet</text>
<text transform="translate(1206 352)rotate(30)" font-size="22" textLength="60" lengthAdjust="spacingAndGlyphs" fill="#aec7e8">cache</text>
<text transform="translate(1335 390)rotate(60)" font-size="20" textLength="90" lengthAdjust="spacingAndGlyphs" fill="#7f7f7f">selection</text>
<text transform="translate(1385 420)rotate(60)" font-size="20" textLength="75" lengthAdjust="spacingAndGlyphs" fill="#c5b0d5">privacy</text>
<text transform="translate(1213 405)rotate(35)" font-size="55" textLength="160" lengthAdjust="spacingAndGlyphs" fill="#c5b0d5">models</text>
<text transform="translate(1332 445)rotate(60)" font-size="24" textLength="75" lengthAdjust="spacingAndGlyphs" fill="#1f77b4">power</text>
<text transform="translate(1160 443)rotate(-90)" font-size="19" textLength="70" lengthAdjust="spacingAndGlyphs" fill="#c5b0d5">speed</text>
<text transform="translate(1040 452)rotate(-90)" font-size="32" textLength="90" lengthAdjust="spacingAndGlyphs" fill="#2ca02c">nodes</text>
<text transform="translate(1010 437)rotate(-90)" font-size="15" textLength="35" lengthAdjust="spacingAndGlyphs" fill="#dbdb8d">job</text>
<text transform="translate(978 403)rotate(-30)" font-size="20" textLength="42" lengthAdjust="spacingAndGlyphs" fill="#c5b0d5">mac</text>
<text transform="translate(948 428)rotate(65)" font-size="50" textLength="165" lengthAdjust="spacingAndGlyphs" fill="#9467bd">design</text>
<text transform="translate(875 395)rotate(65)" font-size="40" textLength="165" lengthAdjust="spacingAndGlyphs" fill="#98df8a">detection</text>
<text transform="translate(838 430)rotate(65)" font-size="62" textLength="215" lengthAdjust="spacingAndGlyphs" fill="#2ca02c">system</text>
<text transform="translate(735 370)" font-size="22" textLength="48" lengthAdjust="spacingAndGlyphs" fill="#ff9896">path</text>
<text transform="translate(725 447)rotate(-90)" font-size="36" textLength="95" lengthAdjust="spacingAndGlyphs" fill="#e377c2">space</text>
<text transform="translate(760 420)rotate(-90)" font-size="22" textLength="48" lengthAdjust="spacingAndGlyphs" fill="#e377c2">load</text>
<text transform="translate(500 366)" font-size="36" textLength="132" lengthAdjust="spacingAndGlyphs" fill="#98df8a">location</text>
<text transform="translate(487 409)" font-size="50" textLength="185" lengthAdjust="spacingAndGlyphs" fill="#9467bd">systems</text>
<text transform="translate(182 424)rotate(35)" font-size="30" textLength="90" lengthAdjust="spacingAndGlyphs" fill="#9467bd">routing</text>
<text transform="translate(135 428)rotate(30)" font-size="22" textLength="55" lengthAdjust="spacingAndGlyphs" fill="#ffbb78">noise</text>
<text transform="translate(248 435)rotate(-90)" font-size="33" textLength="65" lengthAdjust="spacingAndGlyphs" fill="#f7b6d2">tree</text>
<text transform="translate(288 425)rotate(-90)" font-size="38" textLength="135" lengthAdjust="spacingAndGlyphs" fill="#98df8a">sensor</text>
<text transform="translate(582 443)" font-size="26" textLength="85" lengthAdjust="spacingAndGlyphs" fill="#ffbb78">human</text>
<text transform="translate(631 470)rotate(-40)" font-size="16" textLength="30" lengthAdjust="spacingAndGlyphs" fill="#98df8a">art</text>
<text transform="translate(358 478)rotate(-30)" font-size="24" textLength="75" lengthAdjust="spacingAndGlyphs" fill="#8c564b">packet</text>
<text transform="translate(190 488)rotate(35)" font-size="32" textLength="180" lengthAdjust="spacingAndGlyphs" fill="#dbdb8d">management</text>
<text transform="translate(145 497)rotate(25)" font-size="19" textLength="62" lengthAdjust="spacingAndGlyphs" fill="#7f7f7f">robust</text>
<text transform="translate(358 530)rotate(-30)" font-size="60" textLength="235" lengthAdjust="spacingAndGlyphs" fill="#d62728">networks</text>
<text transform="translate(655 548)rotate(40)" font-size="68" textLength="385" lengthAdjust="spacingAndGlyphs" fill="#ffbb78">performance</text>
<text transform="translate(723 527)rotate(35)" font-size="34" textLength="60" lengthAdjust="spacingAndGlyphs" fill="#ff7f0e">task</text>
<text transform="translate(820 535)rotate(65)" font-size="62" textLength="185" lengthAdjust="spacingAndGlyphs" fill="#aec7e8">model</text>
<text transform="translate(1055 535)" font-size="60" textLength="283" lengthAdjust="spacingAndGlyphs" fill="#ff9896">algorithms</text>
<text transform="translate(1238 530)rotate(65)" font-size="50" textLength="185" lengthAdjust="spacingAndGlyphs" fill="#c49c94">learning</text>
<text transform="translate(1293 545)rotate(65)" font-size="22" textLength="85" lengthAdjust="spacingAndGlyphs" fill="#9467bd">parallel</text>
<text transform="translate(1335 540)rotate(65)" font-size="30" textLength="160" lengthAdjust="spacingAndGlyphs" fill="#dbdb8d">environment</text>
<text transform="translate(1375 545)rotate(70)" font-size="20" textLength="70" lengthAdjust="spacingAndGlyphs" fill="#dbdb8d">inference</text>
<text transform="translate(80 575)rotate(-90)" font-size="18" textLength="115" lengthAdjust="spacingAndGlyphs" fill="#7f7f7f">prediction</text>
<text transform="translate(163 542)" font-size="24" textLength="105" lengthAdjust="spacingAndGlyphs" fill="#17becf">spectrum</text>
<text transform="translate(223 617)rotate(-90)" font-size="23" textLength="115" lengthAdjust="spacingAndGlyphs" fill="#ffbb78">temporal</text>
<text transform="translate(155 593)" font-size="24" textLength="95" lengthAdjust="spacingAndGlyphs" fill="#c7c7c7">program</text>
<text transform="translate(375 568)rotate(-25)" font-size="20" textLength="110" lengthAdjust="spacingAndGlyphs" fill="#f7b6d2">structures</text>
<text transform="translate(410 585)rotate(-30)" font-size="57" textLength="155" lengthAdjust="spacingAndGlyphs" fill="#8c564b">search</text>
<text transform="translate(520 560)rotate(60)" font-size="48" textLength="130" lengthAdjust="spacingAndGlyphs" fill="#1f77b4">image</text>
<text transform="translate(582 588)rotate(60)" font-size="45" textLength="130" lengthAdjust="spacingAndGlyphs" fill="#8c564b">mobile</text>
<text transform="translate(1017 580)" font-size="18" textLength="72" lengthAdjust="spacingAndGlyphs" fill="#2ca02c">analyze</text>
<text transform="translate(925 640)rotate(-90)" font-size="45" textLength="135" lengthAdjust="spacingAndGlyphs" fill="#98df8a">query</text>
<text transform="translate(983 606)" font-size="26" textLength="48" lengthAdjust="spacingAndGlyphs" fill="#e377c2">link</text>
<text transform="translate(1038 625)rotate(-25)" font-size="52" textLength="185" lengthAdjust="spacingAndGlyphs" fill="#9467bd">analysis</text>
<text transform="translate(1157 622)rotate(-25)" font-size="38" textLength="150" lengthAdjust="spacingAndGlyphs" fill="#ff9896">technique</text>
<text transform="translate(1254 646)" font-size="30" textLength="128" lengthAdjust="spacingAndGlyphs" fill="#c5b0d5">accuracy</text>
<text transform="translate(1370 655)rotate(65)" font-size="16" textLength="90" lengthAdjust="spacingAndGlyphs" fill="#9467bd">frequency</text>
<text transform="translate(487 630)rotate(40)" font-size="42" textLength="110" lengthAdjust="spacingAndGlyphs" fill="#8c564b">traffic</text>
<text transform="translate(293 638)" font-size="24" textLength="68" lengthAdjust="spacingAndGlyphs" fill="#ff9896">visual</text>
<text transform="translate(133 650)rotate(-90)" font-size="20" textLength="75" lengthAdjust="spacingAndGlyphs" fill="#17becf">random</text>
<text transform="translate(162 645)rotate(-90)" font-size="14" textLength="50" lengthAdjust="spacingAndGlyphs" fill="#2ca02c">aware</text>
<text transform="translate(190 675)rotate(-90)" font-size="25" textLength="125" lengthAdjust="spacingAndGlyphs" fill="#7f7f7f">clustering</text>
<text transform="translate(315 672)" font-size="30" textLength="72" lengthAdjust="spacingAndGlyphs" fill="#98df8a">point</text>
<text transform="translate(460 665)rotate(30)" font-size="26" textLength="75" lengthAdjust="spacingAndGlyphs" fill="#9467bd">terms</text>
<text transform="translate(658 685)rotate(-90)" font-size="36" textLength="180" lengthAdjust="spacingAndGlyphs" fill="#c7c7c7">application</text>
<text transform="translate(720 643)" font-size="26" textLength="52" lengthAdjust="spacingAndGlyphs" fill="#1f77b4">sets</text>
<text transform="translate(858 645)rotate(-30)" font-size="20" textLength="55" lengthAdjust="spacingAndGlyphs" fill="#c5b0d5">cloud</text>
<text transform="translate(618 675)rotate(-30)" font-size="18" textLength="40" lengthAdjust="spacingAndGlyphs" fill="#7f7f7f">map</text>
<text transform="translate(795 690)" font-size="40" textLength="190" lengthAdjust="spacingAndGlyphs" fill="#e377c2">distributed</text>
<text transform="translate(1000 695)rotate(-25)" font-size="38" textLength="95" lengthAdjust="spacingAndGlyphs" fill="#2ca02c">social</text>
<text transform="translate(1173 675)rotate(70)" font-size="20" textLength="65" lengthAdjust="spacingAndGlyphs" fill="#c49c94">codes</text>
<text transform="translate(1233 700)rotate(-25)" font-size="20" textLength="105" lengthAdjust="spacingAndGlyphs" fill="#ffbb78">monitoring</text>
<text transform="translate(1288 705)rotate(-25)" font-size="28" textLength="125" lengthAdjust="spacingAndGlyphs" fill="#1f77b4">computing</text>
<text transform="translate(1323 730)rotate(-25)" font-size="24" textLength="95" lengthAdjust="spacingAndGlyphs" fill="#ff9896">machine</text>
<text transform="translate(372 700)rotate(-55)" font-size="36" textLength="170" lengthAdjust="spacingAndGlyphs" fill="#98df8a">scheduling</text>
<text transform="translate(438 733)rotate(60)" font-size="36" textLength="115" lengthAdjust="spacingAndGlyphs" fill="#c49c94">surface</text>
<text transform="translate(518 720)rotate(-60)" font-size="32" textLength="70" lengthAdjust="spacingAndGlyphs" fill="#bcbd22">state</text>
<text transform="translate(480 712)rotate(-60)" font-size="16" textLength="30" lengthAdjust="spacingAndGlyphs" fill="#f7b6d2">key</text>
<text transform="translate(575 715)rotate(-90)" font-size="32" textLength="150" lengthAdjust="spacingAndGlyphs" fill="#bcbd22">structure</text>
<text transform="translate(617 757)rotate(-90)" font-size="22" textLength="95" lengthAdjust="spacingAndGlyphs" fill="#c7c7c7">content</text>
<text transform="translate(113 740)rotate(60)" font-size="18" textLength="75" lengthAdjust="spacingAndGlyphs" fill="#9467bd">tracking</text>
<text transform="translate(145 740)rotate(65)" font-size="25" textLength="85" lengthAdjust="spacingAndGlyphs" fill="#ffbb78">identity</text>
<text transform="translate(225 730)rotate(-55)" font-size="26" textLength="125" lengthAdjust="spacingAndGlyphs" fill="#aec7e8">investigate</text>
<text transform="translate(258 748)rotate(-55)" font-size="24" textLength="100" lengthAdjust="spacingAndGlyphs" fill="#aec7e8">evaluate</text>
<text transform="translate(280 775)rotate(-60)" font-size="32" textLength="175" lengthAdjust="spacingAndGlyphs" fill="#ff7f0e">optimization</text>
<text transform="translate(408 745)rotate(65)" font-size="20" textLength="60" lengthAdjust="spacingAndGlyphs" fill="#1f77b4">linear</text>
<text transform="translate(765 726)" font-size="30" textLength="115" lengthAdjust="spacingAndGlyphs" fill="#2ca02c">protocol</text>
<text transform="translate(918 762)rotate(25)" font-size="32" textLength="150" lengthAdjust="spacingAndGlyphs" fill="#1f77b4">localization</text>
<text transform="translate(816 765)" font-size="30" textLength="98" lengthAdjust="spacingAndGlyphs" fill="#1f77b4">feature</text>
<text transform="translate(960 752)rotate(25)" font-size="28" textLength="100" lengthAdjust="spacingAndGlyphs" fill="#dbdb8d">memory</text>
<text transform="translate(1030 730)rotate(-40)" font-size="18" textLength="35" lengthAdjust="spacingAndGlyphs" fill="#f7b6d2">test</text>
<text transform="translate(1043 765)rotate(-60)" font-size="30" textLength="175" lengthAdjust="spacingAndGlyphs" fill="#1f77b4">transmission</text>
<text transform="translate(1156 732)rotate(65)" font-size="28" textLength="130" lengthAdjust="spacingAndGlyphs" fill="#dbdb8d">throughput</text>
<text transform="translate(148 815)rotate(30)" font-size="20" textLength="115" lengthAdjust="spacingAndGlyphs" fill="#c7c7c7">databases</text>
<text transform="translate(352 818)rotate(30)" font-size="28" textLength="105" lengthAdjust="spacingAndGlyphs" fill="#bcbd22">distance</text>
<text transform="translate(298 832)rotate(-30)" font-size="18" textLength="45" lengthAdjust="spacingAndGlyphs" fill="#e377c2">code</text>
<text transform="translate(460 803)" font-size="28" textLength="145" lengthAdjust="spacingAndGlyphs" fill="#aec7e8">estimation</text>
<text transform="translate(503 834)" font-size="26" textLength="125" lengthAdjust="spacingAndGlyphs" fill="#e377c2">streaming</text>
<text transform="translate(295 860)rotate(-25)" font-size="18" textLength="80" lengthAdjust="spacingAndGlyphs" fill="#98df8a">fairness</text>
<text transform="translate(141 868)" font-size="24" textLength="132" lengthAdjust="spacingAndGlyphs" fill="#ff9896">distribution</text>
<text transform="translate(408 866)" font-size="22" textLength="142" lengthAdjust="spacingAndGlyphs" fill="#ff7f0e">fundamental</text>
<text transform="translate(540 886)" font-size="20" textLength="85" lengthAdjust="spacingAndGlyphs" fill="#1f77b4">topology</text>
<text transform="translate(663 815)rotate(-25)" font-size="30" textLength="175" lengthAdjust="spacingAndGlyphs" fill="#17becf">effectiveness</text>
<text transform="translate(740 833)rotate(-90)" font-size="24" textLength="75" lengthAdjust="spacingAndGlyphs" fill="#1f77b4">online</text>
<text transform="translate(707 855)rotate(-90)" font-size="18" textLength="60" lengthAdjust="spacingAndGlyphs" fill="#dbdb8d">paper</text>
<text transform="translate(668 865)rotate(-90)" font-size="18" textLength="45" lengthAdjust="spacingAndGlyphs" fill="#c7c7c7">node</text>
<text transform="translate(778 860)rotate(-90)" font-size="18" textLength="80" lengthAdjust="spacingAndGlyphs" fill="#ffbb78">caching</text>
<text transform="translate(812 815)rotate(25)" font-size="30" textLength="90" lengthAdjust="spacingAndGlyphs" fill="#bcbd22">content</text>
<text transform="translate(877 820)rotate(30)" font-size="26" textLength="105" lengthAdjust="spacingAndGlyphs" fill="#17becf">database</text>
<text transform="translate(922 805)rotate(25)" font-size="24" textLength="85" lengthAdjust="spacingAndGlyphs" fill="#9467bd">storage</text>
<text transform="translate(908 879)" font-size="18" textLength="125" lengthAdjust="spacingAndGlyphs" fill="#dbdb8d">visualization</text>
<text transform="translate(1087 775)rotate(-60)" font-size="28" textLength="110" lengthAdjust="spacingAndGlyphs" fill="#98df8a">designed</text>
<text transform="translate(1112 830)rotate(-60)" font-size="20" textLength="120" lengthAdjust="spacingAndGlyphs" fill="#98df8a">adaptation</text>
<text transform="translate(1167 860)rotate(-90)" font-size="24" textLength="78" lengthAdjust="spacingAndGlyphs" fill="#98df8a">stream</text>
<text transform="translate(1028 860)rotate(-60)" font-size="16" textLength="60" lengthAdjust="spacingAndGlyphs" fill="#c7c7c7">global</text>
<text transform="translate(1052 870)rotate(-60)" font-size="16" textLength="50" lengthAdjust="spacingAndGlyphs" fill="#bcbd22">music</text>
<text transform="translate(1236 768)rotate(35)" font-size="18" textLength="50" lengthAdjust="spacingAndGlyphs" fill="#c7c7c7">group</text>
<text transform="translate(1258 803)rotate(-25)" font-size="24" textLength="145" lengthAdjust="spacingAndGlyphs" fill="#7f7f7f">environments</text>
<text transform="translate(1238 850)rotate(-25)" font-size="20" textLength="80" lengthAdjust="spacingAndGlyphs" fill="#d62728">changes</text>
<text transform="translate(1318 830)rotate(-55)" font-size="24" textLength="115" lengthAdjust="spacingAndGlyphs" fill="#ff9896">automatic</text>
<text transform="translate(1376 782)rotate(-90)" font-size="18" textLength="90" lengthAdjust="spacingAndGlyphs" fill="#98df8a">sampling</text>
<text transform="translate(1365 845)rotate(35)" font-size="22" textLength="45" lengthAdjust="spacingAndGlyphs" fill="#c5b0d5">load</text>
</g>

<!-- bars -->
<rect x="1441.5" y="691.5" width="465" height="286" fill="none" stroke="#888"/>
<circle cx="1452.7" cy="702.7" r="6.5" fill="#fff" stroke="#bbb"/>
<circle cx="1530.7" cy="702.7" r="7" fill="#3b93ff"/><circle cx="1530.7" cy="702.7" r="2" fill="#fff"/>
<g transform="translate(1430 670) scale(.33333)">
<path fill="#e377c2" d="M147 733h165v8H147zM327 541h165v34H327zM507 141h165v82H507zM687 279h165v109H687zM867 643h165v28H867zM1047 775h165v7H1047zM1227 451h165v97H1227z"/>
<path fill="#4daf4a" d="M147 741h165v71H147zM327 576h165v236H327zM507 225h165v587H507zM687 390h165v422H687zM867 672h165v140H867zM1047 783h165v29H1047zM1227 549h165v263H1227z"/>
<path fill="none" stroke="#000" stroke-width="8" d="M112 816H1413M127 816V140M112 143h16M112 196h16M112 265h16M112 334h16M112 403h16M112 472h16M112 541h16M112 610h16M112 678h16M112 747h16"/>
<g font-size="38" fill="#000" text-anchor="end">
<text x="92" y="209">90</text><text x="92" y="278">80</text><text x="92" y="346">70</text><text x="92" y="415">60</text><text x="92" y="484">50</text><text x="92" y="553">40</text><text x="92" y="622">30</text><text x="92" y="691">20</text><text x="92" y="760">10</text><text x="92" y="829">0</text>
</g>
<g font-size="38" fill="#000" text-anchor="middle">
<text x="228" y="861">0~11</text><text x="410" y="861">12~23</text><text x="590" y="861">24~35</text><text x="770" y="861">36~47</text><text x="950" y="861">48~59</text><text x="1130" y="861">60~71</text><text x="1310" y="861">quit</text>
<text x="770" y="905" font-size="36">Enjoyed Ph.D time (Months)</text>
</g>
</g>
</svg>
</body></html>
